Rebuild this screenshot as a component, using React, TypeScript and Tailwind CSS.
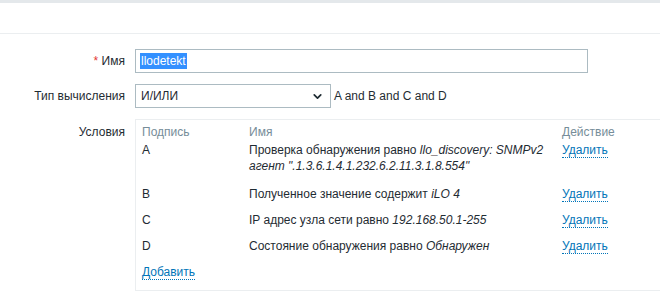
import { ChevronDown } from "lucide-react";

type Condition = {
  label: string;
  text: string;
  value: string;
};

const conditions: Condition[] = [
  {
    label: "A",
    text: "Проверка обнаружения равно ",
    value: 'llo_discovery: SNMPv2 агент ".1.3.6.1.4.1.232.6.2.11.3.1.8.554"',
  },
  { label: "B", text: "Полученное значение содержит ", value: "iLO 4" },
  { label: "C", text: "IP адрес узла сети равно ", value: "192.168.50.1-255" },
  { label: "D", text: "Состояние обнаружения равно ", value: "Обнаружен" },
];

const Link = ({ children }: { children: string }) => (
  <span className="text-[#0275b8] border-b border-dotted border-[#0275b8] cursor-pointer">
    {children}
  </span>
);

const App = () => {
  return (
    <div
      className="w-full min-h-[294px] bg-white text-[12px] text-[#1f2c33] overflow-hidden"
      style={{ fontFamily: '"Liberation Sans", Arial, sans-serif' }}
    >
      <div className="h-[3px] bg-[#e4e8eb]" />
      <div className="h-[31px] border-b border-[#ebeef0]" />

      <div className="mt-[15px] flex flex-col gap-[11px]">
        {/* Name */}
        <div className="flex items-start">
          <div className="w-[125px] text-right leading-[24px]">
            <span className="text-[#e33734]">*</span> Имя
          </div>
          <div className="ml-[10px] w-[453px] h-[24px] border border-[#acbbc2] flex items-center px-[5px]">
            <span className="bg-[#3390ff] text-white leading-[16px] px-px -ml-px">llodetekt</span>
          </div>
        </div>

        {/* Evaluation type */}
        <div className="flex items-start">
          <div className="w-[125px] text-right leading-[24px]">Тип вычисления</div>
          <div className="ml-[10px] w-[196px] h-[24px] border border-[#acbbc2] flex items-center justify-between pl-[5px] pr-[6px]">
            <span>И/ИЛИ</span>
            <ChevronDown size={13} strokeWidth={3.2} className="text-[#1f2c33]" />
          </div>
          <div className="ml-[3px] leading-[24px]">A and B and C and D</div>
        </div>

        {/* Conditions */}
        <div className="flex items-start">
          <div className="w-[125px] text-right pt-[5px] leading-4">Условия</div>
          <div className="ml-[10px] flex-1 border-y border-l border-[#ebeef0] pt-[4px] pb-[5px]">
            <div className="grid grid-cols-[107px_313px_auto] leading-4">
              <div className="pl-[6px] text-[#768d99]">Подпись</div>
              <div className="pl-[6px] text-[#768d99]">Имя</div>
              <div className="pl-[6px] text-[#768d99]">Действие</div>

              {conditions.map((c, i) => {
                const pad = i === 0 ? "pt-[2px] pb-[7px]" : "py-[5px]";
                return (
                  <div key={c.label} className="contents">
                    <div className={`pl-[6px] ${pad}`}>{c.label}</div>
                    <div className={`pl-[6px] pr-[8px] ${pad}`}>
                      {c.text}
                      <i>{c.value}</i>
                    </div>
                    <div className={`pl-[6px] ${pad}`}>
                      <Link>Удалить</Link>
                    </div>
                  </div>
                );
              })}

              <div className="col-span-3 pl-[6px] py-[5px]">
                <Link>Добавить</Link>
              </div>
            </div>
          </div>
        </div>
      </div>
    </div>
  );
};

export default App;
